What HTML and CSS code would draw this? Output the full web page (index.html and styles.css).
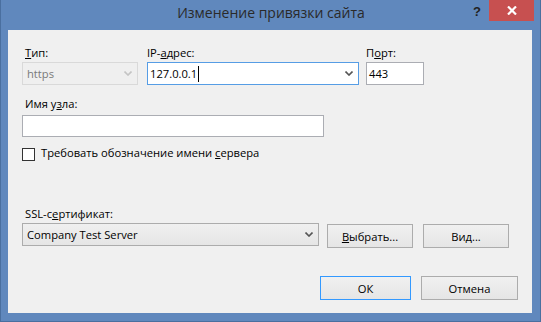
FILE: index.html
```html
<!DOCTYPE html>
<html lang="ru">
<head>
    <meta charset="UTF-8">
    <title>Изменение привязки сайта</title>
    <link rel="stylesheet" href="styles.css">
</head>
<body>

    <div class="window">
        <!-- Title bar -->
        <div class="titlebar">
            <div class="title">Изменение привязки сайта</div>
            <div class="caption-btns">
                <span class="help">?</span>
                <span class="close">
                    <svg width="10" height="9" viewBox="0 0 10 9"><path d="M1 0.5 L9 8.5 M9 0.5 L1 8.5" stroke="#fff" stroke-width="2.2"/></svg>
                </span>
            </div>
        </div>

        <!-- Client area -->
        <div class="client">
            <div class="binding-row">
                <div class="field f-type">
                    <span class="lbl"><u>Т</u>ип:</span>
                    <div class="combo disabled">
                        <span class="val">https</span>
                        <svg class="chev" width="8" height="5" viewBox="0 0 8 5"><path d="M0.5 0.5 L4 4 L7.5 0.5" fill="none" stroke="#c4c4c4" stroke-width="1.6"/></svg>
                    </div>
                </div>
                <div class="field f-ip">
                    <span class="lbl">IP-<u>а</u>дрес:</span>
                    <div class="combo edit focused">
                        <span class="val">127.0.0.1</span><span class="caret"></span>
                        <svg class="chev" width="8" height="5" viewBox="0 0 8 5"><path d="M0.5 0.5 L4 4 L7.5 0.5" fill="none" stroke="#555" stroke-width="1.6"/></svg>
                    </div>
                </div>
                <div class="field f-port">
                    <span class="lbl">П<u>о</u>рт:</span>
                    <div class="textbox">443</div>
                </div>
            </div>

            <div class="field f-host">
                <span class="lbl">Имя у<u>з</u>ла:</span>
                <div class="textbox"></div>
            </div>

            <div class="check-row">
                <span class="checkbox"></span>
                <span class="lbl">Требовать обозначение имени <u>с</u>ервера</span>
            </div>

            <div class="field f-ssl">
                <span class="lbl">SSL-с<u>е</u>ртификат:</span>
                <div class="ssl-row">
                    <div class="combo droplist">
                        <span class="val">Company Test Server</span>
                        <svg class="chev" width="8" height="5" viewBox="0 0 8 5"><path d="M0.5 0.5 L4 4 L7.5 0.5" fill="none" stroke="#555" stroke-width="1.6"/></svg>
                    </div>
                    <div class="btn btn-select"><u>В</u>ыбрать...</div>
                    <div class="btn btn-view">Ви<u>д</u>...</div>
                </div>
            </div>

            <div class="actions">
                <div class="btn btn-ok">ОК</div>
                <div class="btn btn-cancel">Отмена</div>
            </div>
        </div>
    </div>

</body>
</html>
```

FILE: styles.css
```css
/* Global */
* {
    margin: 0;
    padding: 0;
    box-sizing: border-box;
}

body {
    font-family: 'Open Sans', 'Noto Sans', sans-serif;
    font-size: 11.2px;
    color: #000;
    background: #5f87bd;
}

u {
    text-decoration: underline;
    text-underline-offset: 1px;
}

/* Window frame */
.window {
    width: 541px;
    height: 322px;
    background-color: #6088bd;
    border: 1px solid #4a6f9f;
    border-top: none;
}

.titlebar {
    height: 30px;
    display: grid;
    grid-template-columns: 1fr auto 1fr;
}

.title {
    grid-column: 2;
    font-size: 14px;
    line-height: 20px;
    padding-top: 3px;
    color: #2a2a2a;
    margin-left: 1px;
}

.caption-btns {
    grid-column: 3;
    justify-self: end;
    display: flex;
    align-items: flex-start;
    margin-right: 6px;
}

.help {
    font-family: 'Liberation Sans', sans-serif;
    font-weight: bold;
    font-size: 13px;
    line-height: 14px;
    color: #222;
    margin-top: 5px;
    margin-right: 8px;
}

.close {
    width: 45px;
    height: 21px;
    background-color: #c75050;
    display: flex;
    align-items: center;
    justify-content: center;
}

/* Client area */
.client {
    width: 524px;
    height: 283px;
    margin-left: 7px;
    background-color: #f0f0f0;
    padding: 15px 0 0 14px;
}

.lbl {
    display: block;
    line-height: 15px;
    padding-left: 3px;
    white-space: nowrap;
}

.field .lbl {
    margin-bottom: 2px;
}

.binding-row {
    display: flex;
}

.f-type {
    width: 116px;
    margin-right: 9px;
}

.f-ip {
    width: 212px;
    margin-right: 7px;
}

.f-port {
    width: 58px;
}

.f-port .lbl,
.f-ip .lbl {
    padding-left: 0;
}

/* Combos and text boxes */
.combo {
    height: 23px;
    border: 1px solid #acacac;
    display: flex;
    align-items: center;
    padding: 0 5px 0 4px;
}

.combo .val {
    flex: 1;
}

.combo.disabled {
    background-color: #efefef;
    border-color: #d9d9d9;
    color: #7a7a7a;
}

.combo.edit {
    background-color: #fff;
    padding-left: 2px;
}

.combo.edit .val {
    flex: none;
}

.combo.focused {
    border-color: #569de5;
}

.caret {
    width: 1px;
    height: 16px;
    background-color: #000;
    margin-left: 1px;
    margin-right: auto;
}

.chev {
    display: block;
}

.textbox {
    height: 23px;
    border: 1px solid #abadb3;
    background-color: #fff;
    padding: 0 2px;
    line-height: 21px;
}

.f-host {
    margin-top: 11px;
}

.f-host .lbl {
    margin-bottom: 4px;
}

.f-host .textbox {
    width: 302px;
    height: 22px;
}

/* Checkbox */
.check-row {
    display: flex;
    align-items: flex-start;
    margin-top: 8px;
}

.checkbox {
    width: 13px;
    height: 13px;
    border: 1px solid #333;
    background-color: #fff;
    margin-top: 3px;
    margin-right: 3px;
}

.check-row .lbl {
    padding-left: 3px;
}

/* SSL */
.f-ssl {
    margin-top: 45px;
}

.ssl-row {
    display: flex;
    align-items: flex-start;
}

.combo.droplist {
    width: 297px;
    background: linear-gradient(#f0f0f0, #e5e5e5);
}

/* Buttons */
.btn {
    height: 24px;
    border: 1px solid #acacac;
    background: linear-gradient(#f0f0f0, #e5e5e5);
    display: flex;
    align-items: center;
    justify-content: center;
}

.btn-select {
    width: 86px;
    margin-left: 8px;
    margin-top: 1px;
}

.btn-view {
    width: 86px;
    margin-left: 10px;
    margin-top: 1px;
}

.actions {
    display: flex;
    margin-top: 28px;
    padding-left: 298px;
}

.btn-ok {
    width: 91px;
    border-color: #3399ff;
}

.btn-cancel {
    width: 97px;
    margin-left: 10px;
}
```
